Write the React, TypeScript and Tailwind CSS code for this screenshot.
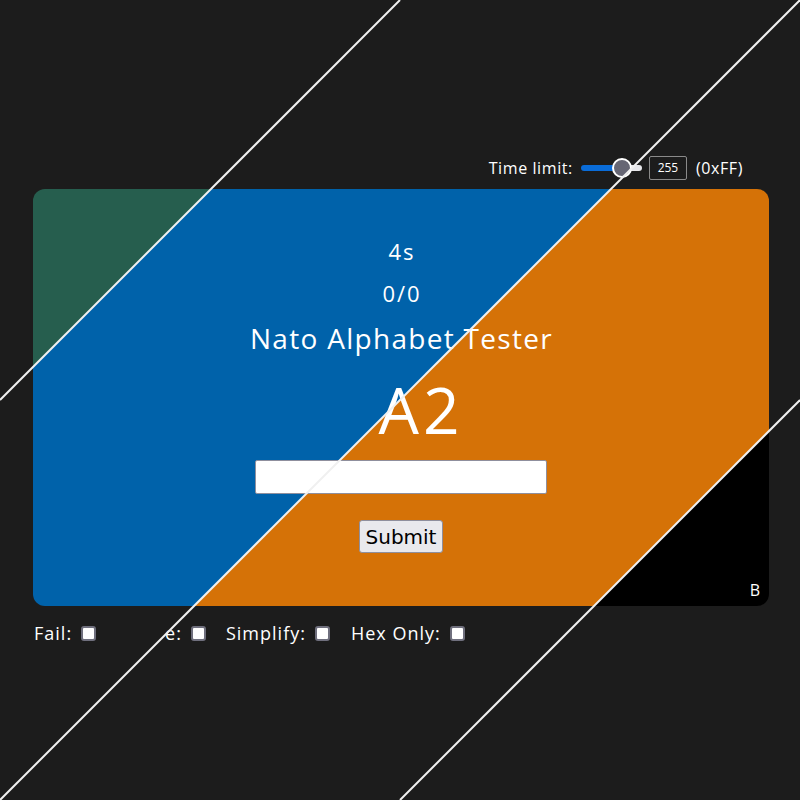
import React from 'react';

const Check: React.FC = () => (
  <span className="inline-block w-[15px] h-[15px] bg-white border-2 border-[#6f6f7d] rounded-[3px]" />
);

const App: React.FC = () => {
  const options = [
    { label: 'Fail:', gap: 'mr-[69px]' },
    { label: 'e:', gap: 'mr-[20px]' },
    { label: 'Simplify:', gap: 'mr-[21px]' },
    { label: 'Hex Only:', gap: '' },
  ];

  return (
    <div className="relative min-h-screen overflow-hidden bg-[#1c1c1c] text-white font-['Open_Sans',sans-serif]">
      {/* Time limit row */}
      <div className="flex items-center justify-end pt-[155px] pr-[57px] h-[181px] text-[16px] tracking-[0.6px]">
        <span>Time limit:</span>
        <div className="relative ml-[8px] w-[61px] h-[20px] flex items-center">
          <div className="w-[34px] h-[6px] bg-[#0a6cd8] rounded-l-full" />
          <div className="flex-1 h-[6px] bg-[#e6e6ea] rounded-r-full" />
          <div className="absolute left-[31px] top-0 w-[20px] h-[20px] rounded-full bg-[#666674] border-2 border-white" />
        </div>
        <div className="ml-[7px] w-[38px] h-[24px] border border-[#8a8a8a] rounded-[2px] flex items-center justify-center text-[12px] tracking-normal">
          255
        </div>
        <span className="ml-[9px]">(0xFF)</span>
      </div>

      {/* Card */}
      <div className="ml-[33px] mt-[8px] w-[736px] h-[417px] rounded-xl flex flex-col items-center bg-[linear-gradient(135deg,#265e4e_125.9px,#0062aa_125.9px,#0062aa_408.7px,#d57207_408.7px,#d57207_691.5px,#000_691.5px)]">
        <div className="mt-[47px] text-[22px] leading-[30px] tracking-[2px] pl-[2px]">4s</div>
        <div className="mt-[12px] text-[22px] leading-[30px] tracking-[2px] pl-[2px]">0/0</div>
        <div className="mt-[12px] text-[28px] leading-[36px] tracking-[1.3px] pl-[1px]">Nato Alphabet Tester</div>
        <div className="mt-[18px] pl-[40px] text-[64px] leading-[72px] tracking-[4px]">A2</div>
        <input
          type="text"
          className="mt-[14px] w-[292px] h-[34px] bg-white border border-[#8f8f9d] rounded-[2px] outline-none"
        />
        <button className="mt-[26px] h-[33px] px-[6px] bg-[#e9e9ed] border border-[#8f8f9d] rounded-[3px] text-black text-[20px] font-['DejaVu_Sans',sans-serif]">
          Submit
        </button>
        <div className="mt-auto self-end pr-[9px] pb-[6px] text-[16px] leading-[20px]">B</div>
      </div>

      {/* Options row */}
      <div className="flex items-center pl-[34px] mt-[14px] text-[18px] tracking-[1px]">
        {options.map((opt, i) => (
          <div key={i} className={`flex items-center ${opt.gap}`}>
            <span>{opt.label}</span>
            <span className="ml-[9px] flex items-center">
              <Check />
            </span>
          </div>
        ))}
      </div>

      {/* Diagonal lines */}
      <svg className="absolute left-0 top-0 pointer-events-none" width="800" height="800" viewBox="0 0 800 800">
        <line x1="0" y1="400" x2="400" y2="0" stroke="#f0f0f0" strokeWidth="2" />
        <line x1="0" y1="800" x2="800" y2="0" stroke="#f0f0f0" strokeWidth="2" />
        <line x1="400" y1="800" x2="800" y2="400" stroke="#f0f0f0" strokeWidth="2" />
      </svg>
    </div>
  );
};

export default App;
